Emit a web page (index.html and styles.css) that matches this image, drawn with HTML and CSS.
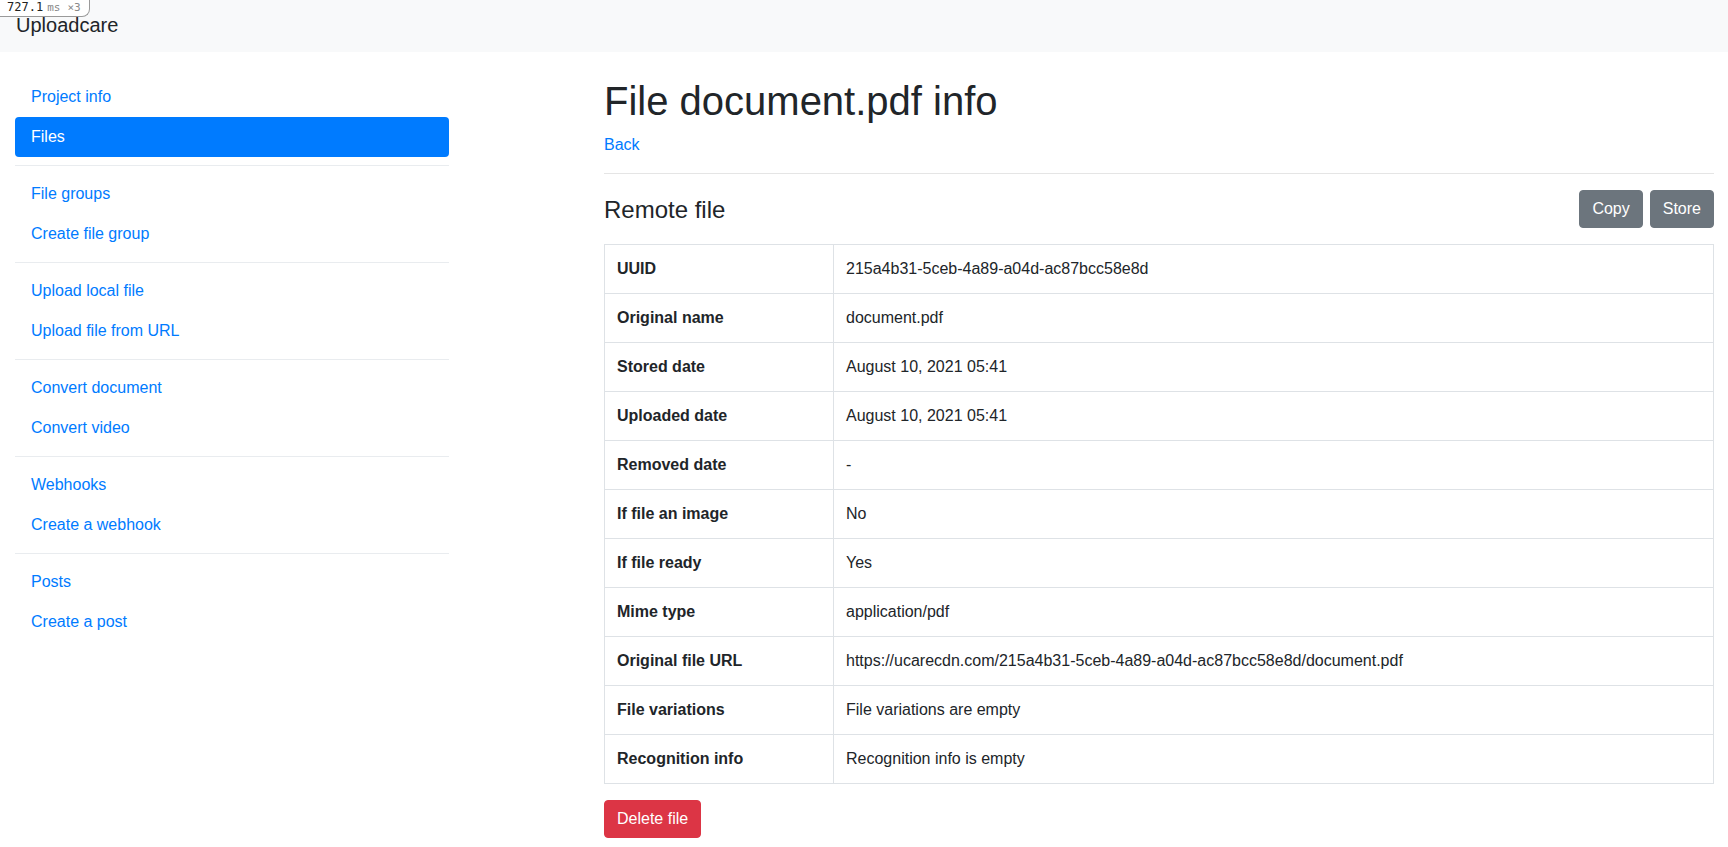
FILE: index.html
```html
<!DOCTYPE html>
<html lang="en">
<head>
<meta charset="utf-8">
<title>File document.pdf info</title>
<link rel="stylesheet" href="styles.css">
</head>
<body>
<div class="timing"><span class="t-val">727.1</span><span class="t-unit">ms</span><span class="t-count">×3</span></div>
<nav class="navbar">
  <a class="brand" href="#">Uploadcare</a>
</nav>
<div class="layout">
  <aside class="sidebar">
    <a class="nav-link" href="#">Project info</a>
    <a class="nav-link active" href="#">Files</a>
    <hr class="side-hr">
    <a class="nav-link" href="#">File groups</a>
    <a class="nav-link" href="#">Create file group</a>
    <hr class="side-hr">
    <a class="nav-link" href="#">Upload local file</a>
    <a class="nav-link" href="#">Upload file from URL</a>
    <hr class="side-hr">
    <a class="nav-link" href="#">Convert document</a>
    <a class="nav-link" href="#">Convert video</a>
    <hr class="side-hr">
    <a class="nav-link" href="#">Webhooks</a>
    <a class="nav-link" href="#">Create a webhook</a>
    <hr class="side-hr">
    <a class="nav-link" href="#">Posts</a>
    <a class="nav-link" href="#">Create a post</a>
  </aside>
  <main class="main">
    <h1 class="title">File document.pdf info</h1>
    <div class="back-row"><a class="link" href="#">Back</a></div>
    <hr class="main-hr">
    <div class="section-head">
      <h4 class="section-title">Remote file</h4>
      <div class="actions">
        <button class="btn btn-secondary">Copy</button>
        <button class="btn btn-secondary">Store</button>
      </div>
    </div>
    <table class="info-table">
      <tbody>
        <tr><th>UUID</th><td>215a4b31-5ceb-4a89-a04d-ac87bcc58e8d</td></tr>
        <tr><th>Original name</th><td>document.pdf</td></tr>
        <tr><th>Stored date</th><td>August 10, 2021 05:41</td></tr>
        <tr><th>Uploaded date</th><td>August 10, 2021 05:41</td></tr>
        <tr><th>Removed date</th><td>-</td></tr>
        <tr><th>If file an image</th><td>No</td></tr>
        <tr><th>If file ready</th><td>Yes</td></tr>
        <tr><th>Mime type</th><td>application/pdf</td></tr>
        <tr><th>Original file URL</th><td>https://ucarecdn.com/215a4b31-5ceb-4a89-a04d-ac87bcc58e8d/document.pdf</td></tr>
        <tr><th>File variations</th><td>File variations are empty</td></tr>
        <tr><th>Recognition info</th><td>Recognition info is empty</td></tr>
      </tbody>
    </table>
    <button class="btn btn-danger">Delete file</button>
  </main>
</div>
</body>
</html>
```
FILE: styles.css
```css
* { box-sizing: border-box; }

html, body {
  margin: 0;
  padding: 0;
}

body {
  font-family: "Liberation Sans", Arial, "Helvetica Neue", sans-serif;
  font-size: 16px;
  line-height: 24px;
  color: #212529;
  background: #fff;
}

.timing {
  position: absolute;
  top: 0;
  left: 0;
  z-index: 10;
  background: #fff;
  border: 1px solid #9a9a9a;
  border-top: 0;
  border-left: 0;
  border-bottom-right-radius: 8px;
  padding: 0 8px 1px 7px;
  font-family: "DejaVu Sans Mono", "Liberation Mono", monospace;
  font-size: 12px;
  line-height: 15px;
  color: #222;
  white-space: nowrap;
}

.t-unit {
  color: #888;
  font-size: 11px;
  margin-left: 4px;
}

.t-count {
  color: #888;
  font-size: 11px;
  margin-left: 7px;
}

.navbar {
  height: 52px;
  background: #f8f9fa;
  padding: 13px 16px 15px;
}

.brand {
  display: block;
  font-size: 20px;
  line-height: 24px;
  color: #212529;
  text-decoration: none;
}

.layout {
  display: grid;
  grid-template-columns: 434px 1fr;
  column-gap: 155px;
  padding: 25px 14px 0 15px;
}

.sidebar {
  display: flex;
  flex-direction: column;
}

.nav-link {
  display: block;
  padding: 8px 16px;
  line-height: 24px;
  color: #007bff;
  text-decoration: none;
  border-radius: 4px;
}

.nav-link.active {
  background: #007bff;
  color: #fff;
}

.side-hr {
  margin: 8px 0;
  border: 0;
  border-top: 1px solid #e9ecef;
  height: 0;
}

.main {
  min-width: 0;
}

.title {
  margin: 0 0 8px;
  font-size: 40px;
  line-height: 48px;
  font-weight: 400;
}

.link {
  color: #007bff;
  text-decoration: none;
}

.main-hr {
  margin: 16px 0;
  border: 0;
  border-top: 1px solid rgba(0, 0, 0, 0.1);
  height: 0;
}

.section-head {
  display: flex;
  align-items: center;
  justify-content: space-between;
  margin-bottom: 16px;
}

.section-title {
  margin: 0;
  font-size: 24px;
  line-height: 29px;
  font-weight: 400;
}

.actions {
  display: flex;
  gap: 7px;
}

.btn {
  display: inline-block;
  font-family: inherit;
  font-size: 16px;
  line-height: 24px;
  padding: 6px 12px;
  border: 1px solid transparent;
  border-radius: 4px;
  color: #fff;
  cursor: pointer;
}

.btn-secondary {
  background: #6c757d;
  border-color: #6c757d;
}

.btn-danger {
  background: #dc3545;
  border-color: #dc3545;
  margin-top: 16px;
}

.info-table {
  width: 100%;
  border-collapse: collapse;
  border: 1px solid #dee2e6;
}

.info-table th,
.info-table td {
  padding: 12px;
  border: 1px solid #dee2e6;
  text-align: left;
  vertical-align: top;
  line-height: 24px;
}

.info-table th {
  width: 229px;
  font-weight: 700;
}
```
